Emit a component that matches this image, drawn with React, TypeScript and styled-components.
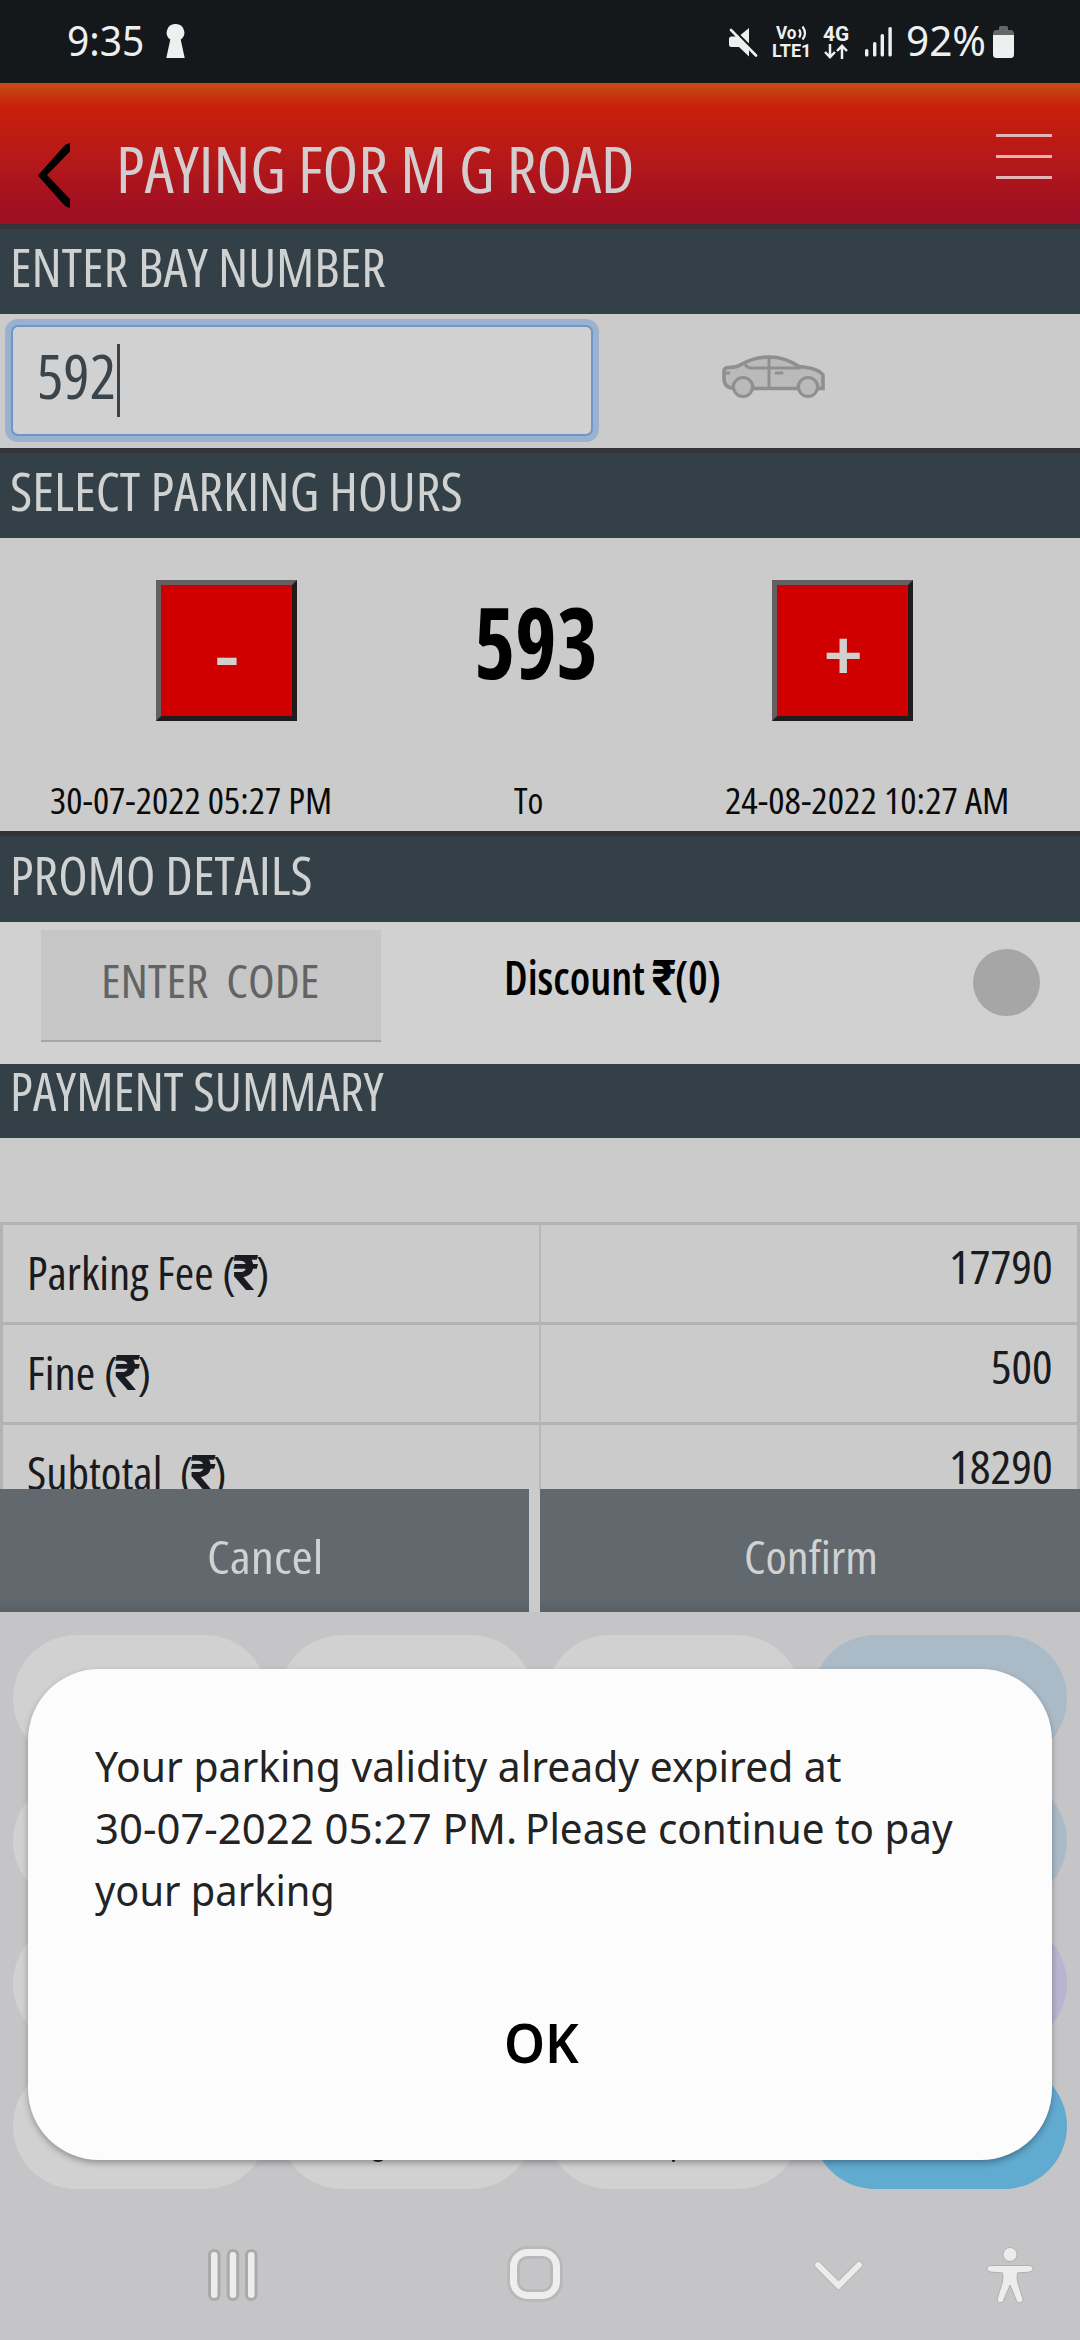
import React, { useLayoutEffect, useRef, useState } from "react";
import styled, { createGlobalStyle } from "styled-components";

const narrow = '"Open Sans", "Noto Sans", sans-serif';
const system = '"Noto Sans", "Open Sans", sans-serif';

const GlobalStyle = createGlobalStyle`
  * { box-sizing: border-box; }
  body { margin: 0; background: #c5c5c8; }
`;

/* ---------- text that is fitted to a given width ---------- */

const FitBox = styled.span<{ $w: number; $size: number }>`
  display: block;
  flex: none;
  width: ${(p) => p.$w}px;
  height: ${(p) => p.$size}px;
  line-height: ${(p) => p.$size}px;
  font-size: ${(p) => p.$size}px;
`;

const FitInner = styled.span`
  display: inline-block;
  vertical-align: top;
  white-space: pre;
  transform-origin: 0 50%;
`;

function Fit({ w, size, children }: { w: number; size: number; children: React.ReactNode }) {
  const ref = useRef<HTMLSpanElement>(null);
  const [scale, setScale] = useState(1);
  useLayoutEffect(() => {
    const measure = () => {
      if (ref.current && ref.current.offsetWidth) setScale(w / ref.current.offsetWidth);
    };
    measure();
    document.fonts?.ready.then(measure);
  }, [w, size]);
  return (
    <FitBox $w={w} $size={size}>
      <FitInner ref={ref} style={{ transform: `scaleX(${scale})` }}>
        {children}
      </FitInner>
    </FitBox>
  );
}

/* ---------- frame ---------- */

const Screen = styled.div`
  position: relative;
  width: 1080px;
  height: 2340px;
  overflow: hidden;
  display: flex;
  flex-direction: column;
  background: #cbcbcb;
  font-family: ${narrow};
  font-stretch: 75%;
`;

const StatusBar = styled.header`
  height: 83px;
  flex: none;
  display: flex;
  align-items: center;
  justify-content: space-between;
  padding: 0 66px 0 67px;
  background: #14181b;
  color: #eeefef;
  font-family: ${system};
  font-stretch: 100%;
`;

const StatusLeft = styled.div`
  display: flex;
  align-items: center;
  gap: 22px;
  padding-bottom: 2px;
`;

const StatusRight = styled.div`
  display: flex;
  align-items: center;
`;

const StatusItem = styled.div<{ $gap: number; $lift?: number }>`
  display: flex;
  margin-left: ${(p) => p.$gap}px;
  padding-bottom: ${(p) => p.$lift || 0}px;
`;

const Stacked = styled.div<{ $gap: number }>`
  display: flex;
  flex-direction: column;
  align-items: center;
  margin-left: ${(p) => p.$gap}px;
  font-family: Roboto, sans-serif;
  font-weight: 700;
`;

const StackLine = styled.div`
  display: flex;
  gap: 1px;
`;

const AppBar = styled.div`
  height: 141px;
  flex: none;
  display: flex;
  align-items: flex-start;
  padding: 0 28px 0 37px;
  background: linear-gradient(#c64c19 0, #c8360f 9%, #c8200a 17%, #b91a17 48%, #a11022 88%, #9d0e26 100%);
  color: #d3cdcf;
`;

const BackButton = styled.div`
  margin-top: 60px;
  width: 79px;
  display: flex;
`;

const Title = styled.h1`
  margin: 54px 0 0;
  flex: 1;
  font-weight: 400;
`;

const Menu = styled.div`
  width: 56px;
  margin-top: 51px;
  display: grid;
  gap: 18px;
`;

const MenuLine = styled.div`
  height: 3px;
  background: #e2b4b5;
`;

const SectionTitle = styled.h2<{ $h: number; $pad: number; $line?: boolean }>`
  margin: 0;
  flex: none;
  height: ${(p) => p.$h}px;
  padding: ${(p) => p.$pad}px 0 0 10px;
  border-top: ${(p) => (p.$line ? "5px solid #333436" : "0")};
  background: #344048;
  color: #d0d1d1;
  font-weight: 400;
`;

/* ---------- bay number ---------- */

const BayRow = styled.div`
  height: 134px;
  flex: none;
  display: flex;
  padding: 11px 0 0 11px;
`;

const BayInput = styled.div`
  width: 582px;
  height: 111px;
  display: flex;
  gap: 1px;
  padding: 17px 0 0 24px;
  border: 2px solid #6d97c6;
  border-radius: 7px;
  background: #d1d1d1;
  box-shadow: 0 0 0 6px #9ab1cf;
  color: #3c444b;
`;

const Caret = styled.div`
  width: 3px;
  height: 73px;
  background: #3b434a;
`;

const CarIcon = styled.svg`
  margin: 30px 0 0 129px;
`;

/* ---------- hours ---------- */

const Hours = styled.div`
  height: 293px;
  flex: none;
`;

const Stepper = styled.div`
  height: 250px;
  display: flex;
  justify-content: space-between;
  align-items: flex-start;
  padding: 42px 167px 0 156px;
`;

const StepButton = styled.div`
  width: 141px;
  height: 141px;
  display: flex;
  justify-content: center;
  padding-top: 32px;
  border: 5px solid;
  border-color: #646062 #211b1b #211b1b #646062;
  background: #d00000;
  color: #d3cfcf;
  font-weight: 600;
`;

const HourCount = styled.div`
  margin-top: 12px;
  padding-left: 2px;
  font-weight: 700;
  color: #000;
`;

const Period = styled.div`
  display: flex;
  justify-content: space-between;
  margin-top: -5px;
  padding: 0 71px 0 50px;
  color: #0a0a0a;
`;

/* ---------- promo ---------- */

const Promo = styled.div`
  height: 142px;
  flex: none;
  display: flex;
  align-items: flex-start;
  padding: 8px 40px 0 41px;
  background: #d1d1d1;
`;

const CodeInput = styled.div`
  width: 340px;
  height: 112px;
  padding: 27px 0 0 60px;
  border-bottom: 2px solid #a6a6a6;
  background: #c6c6c6;
  color: #636363;
`;

const Discount = styled.div`
  margin: 24px auto 0 123px;
  color: #000;
  font-weight: 600;
`;

const Dot = styled.div`
  width: 67px;
  height: 67px;
  margin-top: 19px;
  border-radius: 50%;
  background: #a6a6a6;
`;

const Rupee = styled.span<{ $tight: number }>`
  margin: 0 -${(p) => p.$tight}px;
  font-family: Inter, Roboto, sans-serif;
  font-weight: 700;
  font-size: 48px;
  line-height: 0;
`;

/* ---------- summary ---------- */

const Summary = styled.div`
  height: 351px;
  flex: none;
  padding-top: 84px;
  overflow: hidden;
`;

const SummaryRow = styled.div`
  display: grid;
  grid-template-columns: 536px 1fr;
  height: 100px;
  border: solid #b3b3b3;
  border-width: 3px 3px 0;
  color: #191b20;
`;

const Label = styled.div`
  padding: 24px 0 0 24px;
`;

const Value = styled.div`
  display: flex;
  justify-content: flex-end;
  padding: 18px 24px 0 0;
  border-left: 2px solid #b8b8b8;
`;

const Actions = styled.div`
  height: 123px;
  flex: none;
  display: grid;
  grid-template-columns: 529px 540px;
  gap: 11px;
`;

const ActionButton = styled.div`
  display: flex;
  justify-content: center;
  padding: 44px 0 0 1px;
  background: linear-gradient(#61686e 0, #61686e 88%, #5a6067 100%);
  color: #d0d1d1;
`;

/* ---------- keyboard ---------- */

const Keyboard = styled.div`
  flex: 1;
  padding: 23px 13px 0;
  background: #c5c5c8;
`;

const Keys = styled.div`
  display: grid;
  grid-template-columns: repeat(4, 255px);
  justify-content: space-between;
  row-gap: 16px;
`;

const Key = styled.div<{ $c?: string }>`
  height: 126.5px;
  border-radius: 64px;
  background: ${(p) => p.$c || "#d1d1d1"};
  display: flex;
  align-items: flex-end;
  justify-content: center;
`;

const KeyMark = styled.div<{ $w: number; $shift: number }>`
  width: ${(p) => p.$w}px;
  height: 8px;
  margin: 0 ${(p) => p.$shift}px 27px 0;
  border-radius: 0 0 8px 8px;
  background: #222;
`;

const NavBar = styled.nav`
  display: flex;
  align-items: center;
  height: 60px;
  margin: 56px 0 0;
  padding-left: 192px;
`;

const NavIcon = styled.svg<{ $gap?: number }>`
  flex: none;
  margin-left: ${(p) => p.$gap || 0}px;
`;

/* ---------- dialog ---------- */

const Dialog = styled.div`
  position: absolute;
  left: 28px;
  top: 1669px;
  width: 1024px;
  height: 491px;
  border-radius: 71px;
  background: #fcfcfc;
  box-shadow: 0 3px 6px rgba(0, 0, 0, 0.3);
  color: #232323;
  font-family: ${system};
  font-stretch: 100%;
`;

const Message = styled.div`
  display: grid;
  gap: 20px;
  padding: 76px 0 0 67px;
`;

const MessageLine = styled.div`
  display: flex;
  gap: 8px;
`;

const Ok = styled.div`
  display: flex;
  justify-content: center;
  margin-top: 103px;
  padding-left: 3px;
  font-weight: 600;
  color: #000;
`;

const rows = [
  { label: "Parking Fee (", w: 242, value: "17790", vw: 104 },
  { label: "Fine (", w: 124, value: "500", vw: 62 },
  { label: "Subtotal  (", w: 200, value: "18290", vw: 104 },
];

const keyColors = [
  "", "", "", "#aabac7",
  "", "", "", "#aabac7",
  "", "", "", "#b9b4cf",
  "", "", "", "#61aad0",
];

export default function App() {
  return (
    <Screen>
      <GlobalStyle />
      <StatusBar>
        <StatusLeft>
          <Fit w={77} size={41}>9:35</Fit>
          <svg width="19" height="34" viewBox="0 0 19 34">
            <path d="M9.5 0a8.6 8.6 0 0 1 5.2 15.6L18.7 34H.3L4.3 15.6A8.6 8.6 0 0 1 9.5 0z" fill="#eef0f0" />
          </svg>
        </StatusLeft>
        <StatusRight>
          <svg width="30" height="30" viewBox="0 0 30 30" fill="#eef0f0">
            <path d="M21 1v15.5L12.5 8z" />
            <path d="M3.5 9.5h5L21 22v7.5L11 20H3.5A2.5 2.5 0 0 1 1 17.500v-5.500a2.500 2.500 0 0 1 2.500-2.500z" />
            <path d="M3 3l25 25.500" stroke="#eef0f0" strokeWidth="2.600" strokeLinecap="round" />
          </svg>
          <Stacked $gap={14}>
            <StackLine>
              <Fit w={21} size={18}>Vo</Fit>
              <svg width="10" height="18" viewBox="0 0 10 18" fill="none" stroke="#eef0f0" strokeWidth="2.200">
                <path d="M1 5.500q3 4 0 8M4.500 2.500q5 7 0 13" />
              </svg>
            </StackLine>
            <Fit w={39} size={18}>LTE1</Fit>
          </Stacked>
          <Stacked $gap={12}>
            <Fit w={26} size={20}>4G</Fit>
            <svg width="24" height="15" viewBox="0 0 24 15" fill="none" stroke="#eef0f0" strokeWidth="2.500">
              <path d="M6 0v13M1 8l5 5.200L11 8M18 15V2M13 7l5-5.200L23 7" />
            </svg>
          </Stacked>
          <StatusItem $gap={16}>
            <svg width="27" height="30" viewBox="0 0 27 30" fill="#eef0f0">
              <rect x="0" y="22" width="3.400" height="7.500" rx="1.500" />
              <rect x="8" y="15" width="3.400" height="14.500" rx="1.500" />
              <rect x="15.600" y="7" width="3.400" height="22.500" rx="1.500" />
              <rect x="23.400" y="0" width="3.400" height="29.500" rx="1.500" />
            </svg>
          </StatusItem>
          <StatusItem $gap={14} $lift={2}>
            <Fit w={80} size={41}>92%</Fit>
          </StatusItem>
          <StatusItem $gap={7}>
            <svg width="21" height="32" viewBox="0 0 21 32">
              <path d="M6 1.500Q6 0 7.500 0h6Q15 0 15 1.500V4h2.500Q21 4 21 8v2H0V8q0-4 3.500-4H6z" fill="#666868" />
              <path d="M0 9h21v19.500Q21 32 17.500 32h-14Q0 32 0 28.500z" fill="#eef0f0" />
            </svg>
          </StatusItem>
        </StatusRight>
      </StatusBar>

      <AppBar>
        <BackButton>
          <svg width="34" height="65" viewBox="0 0 34 65">
            <path d="M33 0 28 2 .8 32.500 28 63l5 2v-9L10 32 33 8.500z" fill="#000" />
          </svg>
        </BackButton>
        <Title>
          <Fit w={519} size={64}>PAYING FOR M G ROAD</Fit>
        </Title>
        <Menu>
          <MenuLine />
          <MenuLine />
          <MenuLine />
        </Menu>
      </AppBar>

      <SectionTitle $h={90} $pad={12} $line>
        <Fit w={376} size={52}>ENTER BAY NUMBER</Fit>
      </SectionTitle>
      <BayRow>
        <BayInput>
          <Fit w={79} size={62}>592</Fit>
          <Caret />
        </BayInput>
        <CarIcon width="104" height="44" viewBox="0 0 104 44" fill="none" stroke="#8f8f8f" strokeWidth="3.600">
          <path d="M11 33.500Q2 32 2 24v-8q0-3 4-3.500 9 0 13-3Q32 2 47 2q16 0 30 9.500Q96 13 101 20v13.500H96a10 10 0 0 0-20 0H31a10 10 0 0 0-20 0z" fill="#bababa" />
          <path d="M23 9q2 4 6 4h50M47 2v32M2 18h6" strokeWidth="3" />
          <path d="M54 18h6" strokeWidth="3" strokeLinecap="round" />
          <circle cx="21" cy="32" r="9.500" fill="#bababa" strokeWidth="3" />
          <circle cx="86" cy="32" r="9.500" fill="#bababa" strokeWidth="3" />
        </CarIcon>
      </BayRow>

      <SectionTitle $h={90} $pad={12} $line>
        <Fit w={453} size={52}>SELECT PARKING HOURS</Fit>
      </SectionTitle>
      <Hours>
        <Stepper>
          <StepButton>
            <Fit w={24} size={72}>-</Fit>
          </StepButton>
          <HourCount>
            <Fit w={124} size={98}>593</Fit>
          </HourCount>
          <StepButton>
            <Fit w={38} size={72}>+</Fit>
          </StepButton>
        </Stepper>
        <Period>
          <Fit w={282} size={36}>30-07-2022 05:27 PM</Fit>
          <Fit w={29} size={36}>To</Fit>
          <Fit w={284} size={36}>24-08-2022 10:27 AM</Fit>
        </Period>
      </Hours>

      <SectionTitle $h={91} $pad={13} $line>
        <Fit w={303} size={52}>PROMO DETAILS</Fit>
      </SectionTitle>
      <Promo>
        <CodeInput>
          <Fit w={218} size={46}>ENTER  CODE</Fit>
        </CodeInput>
        <Discount>
          <Fit w={217} size={47}>Discount <Rupee $tight={2}>₹</Rupee>(0)</Fit>
        </Discount>
        <Dot />
      </Promo>

      <SectionTitle $h={74} $pad={1}>
        <Fit w={374} size={52}>PAYMENT SUMMARY</Fit>
      </SectionTitle>
      <Summary>
        {rows.map((r) => (
          <SummaryRow key={r.value}>
            <Label>
              <Fit w={r.w} size={46}>{r.label}<Rupee $tight={4}>₹</Rupee>)</Fit>
            </Label>
            <Value>
              <Fit w={r.vw} size={46}>{r.value}</Fit>
            </Value>
          </SummaryRow>
        ))}
      </Summary>
      <Actions>
        <ActionButton>
          <Fit w={116} size={46}>Cancel</Fit>
        </ActionButton>
        <ActionButton>
          <Fit w={134} size={46}>Confirm</Fit>
        </ActionButton>
      </Actions>

      <Keyboard>
        <Keys>
          {keyColors.map((c, i) => (
            <Key key={i} $c={c}>
              {i === 13 && <KeyMark $w={16} $shift={58} />}
              {i === 14 && <KeyMark $w={3} $shift={0} />}
            </Key>
          ))}
        </Keys>
        <NavBar>
          <NavIcon width="56" height="56" viewBox="0 0 56 56" stroke="#aaaaab" strokeWidth="3" fill="#ececec">
            <rect x="4.500" y="3.500" width="9.500" height="49" rx="4.700" />
            <rect x="23.200" y="3.500" width="9.500" height="49" rx="4.700" />
            <rect x="41.500" y="3.500" width="9.500" height="49" rx="4.700" />
          </NavIcon>
          <NavIcon $gap={246} width="58" height="58" viewBox="0 0 58 58" fill="none">
            <rect x="6.500" y="6.500" width="43" height="43" rx="14" stroke="#b8b8b9" strokeWidth="12.500" />
            <rect x="6.500" y="6.500" width="43" height="43" rx="14" stroke="#eeeeee" strokeWidth="7" />
          </NavIcon>
          <NavIcon $gap={246} width="54" height="40" viewBox="0 0 54 40" fill="none" strokeLinecap="round">
            <path d="M7 10l20.500 20.500L48 10" stroke="#b3b3b4" strokeWidth="7.600" />
            <path d="M7 10l20.500 20.500L48 10" stroke="#ececec" strokeWidth="6" />
          </NavIcon>
          <NavIcon $gap={120} width="50" height="60" viewBox="0 0 50 60" fill="#ececec" stroke="#b0b0b1" strokeWidth="1">
            <circle cx="25" cy="9.500" r="7" />
            <path d="M6 20.500h38q4 0 4 3.200t-4 3.400l-11.500.8q-1 5 .2 9.500l5 16q1 3.300-2 4.200t-4.200-2L25 40l-6.500 15.600q-1.300 2.900-4.200 2t-2-4.200l5-16q1.200-4.500.2-9.500L6 27.100q-4-.2-4-3.400t4-3.200z" />
          </NavIcon>
        </NavBar>
      </Keyboard>

      <Dialog>
        <Message>
          <Fit w={746} size={42}>Your parking validity already expired at</Fit>
          <MessageLine>
            <Fit w={422} size={42}>30-07-2022 05:27 PM.</Fit>
            <Fit w={428} size={42}>Please continue to pay</Fit>
          </MessageLine>
          <Fit w={240} size={42}>your parking</Fit>
        </Message>
        <Ok>
          <Fit w={75} size={55}>OK</Fit>
        </Ok>
      </Dialog>
    </Screen>
  );
}
